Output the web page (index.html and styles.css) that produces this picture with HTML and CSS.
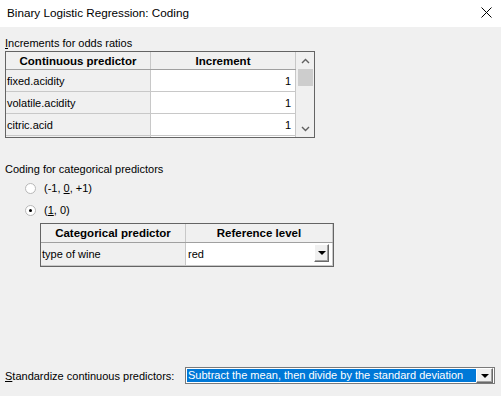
FILE: index.html
```html
<!DOCTYPE html>
<html lang="en">
<head>
    <meta charset="UTF-8">
    <title>Binary Logistic Regression: Coding</title>
    <link rel="stylesheet" href="styles.css">
</head>
<body>
    <div class="dialog">
        <div class="titlebar">
            <span class="title">Binary Logistic Regression: Coding</span>
            <svg class="close" width="11" height="11" viewBox="0 0 11 11">
                <path d="M0.5 0.5 L10.5 10.5 M10.5 0.5 L0.5 10.5" stroke="#000" stroke-width="1" fill="none"/>
            </svg>
        </div>

        <div class="content">
            <div class="label"><u>I</u>ncrements for odds ratios</div>
            <div class="grid-box increments">
                <div class="grid-scroll">
                    <table class="grid">
                        <tr>
                            <th class="col-a">Continuous predictor</th>
                            <th class="col-b">Increment</th>
                        </tr>
                        <tr><td class="name">fixed.acidity</td><td class="num">1</td></tr>
                        <tr><td class="name">volatile.acidity</td><td class="num">1</td></tr>
                        <tr><td class="name">citric.acid</td><td class="num">1</td></tr>
                        <tr class="peek"><td class="name"></td><td class="num"></td></tr>
                    </table>
                </div>
                <div class="scrollbar">
                    <svg class="arrow" width="9" height="6" viewBox="0 0 9 6">
                        <path d="M1 5 L4.5 1.5 L8 5" stroke="#606060" stroke-width="1.4" fill="none"/>
                    </svg>
                    <div class="thumb"></div>
                    <div class="track"></div>
                    <svg class="arrow" width="9" height="6" viewBox="0 0 9 6">
                        <path d="M1 1 L4.5 4.5 L8 1" stroke="#606060" stroke-width="1.4" fill="none"/>
                    </svg>
                </div>
            </div>

            <div class="label section">Coding for categorical predictors</div>
            <div class="radio-row">
                <span class="radio"></span>
                <span>(-1, <u>0</u>, +1)</span>
            </div>
            <div class="radio-row">
                <span class="radio checked"></span>
                <span>(<u>1</u>, 0)</span>
            </div>

            <div class="grid-box categorical">
                <table class="grid">
                    <tr>
                        <th class="col-c">Categorical predictor</th>
                        <th class="col-d">Reference level</th>
                    </tr>
                    <tr>
                        <td class="name">type of wine</td>
                        <td class="combo-cell">
                            <span>red</span>
                            <span class="drop-btn"><span class="tri"></span></span>
                        </td>
                    </tr>
                </table>
            </div>

            <div class="standardize">
                <span class="std-label"><u>S</u>tandardize continuous predictors:</span>
                <div class="combo">
                    <span class="combo-text">Subtract the mean, then divide by the standard deviation</span>
                    <span class="drop-btn"><span class="tri"></span></span>
                </div>
            </div>
        </div>
    </div>
</body>
</html>
```

FILE: styles.css
```css
body {
    margin: 0;
    font-family: "Liberation Sans", Arial, sans-serif;
    font-size: 11px;
    color: #000;
}
.dialog {
    width: 501px;
    height: 396px;
    background-color: #f0f0f0;
    overflow: hidden;
}
.titlebar {
    height: 27px;
    background-color: #fff;
    display: flex;
    align-items: center;
    justify-content: space-between;
    padding: 0 9px 0 7px;
}
.title {
    font-size: 11.7px;
    margin-top: -2px;
}
.close {
    margin-top: -3px;
}
.content {
    padding: 8px 0 0 5px;
}
.label {
    height: 16px;
    line-height: 16px;
}
.label.section {
    margin-top: 23px;
}
.grid-box {
    border: 1px solid #646464;
    background-color: #fff;
    display: flex;
    overflow: hidden;
}
.increments {
    width: 308px;
    height: 85px;
}
.grid-scroll {
    width: 290px;
    height: 85px;
    overflow: hidden;
}
.grid {
    border-collapse: collapse;
    table-layout: fixed;
}
.grid th {
    height: 17px;
    padding: 0;
    font-size: 11.5px;
    font-weight: bold;
    text-align: center;
    background-color: #f0f0f0;
    border-right: 1px solid #c8c8c8;
    border-bottom: 1px solid #a0a0a0;
}
.grid td {
    height: 21px;
    padding: 0 4px 0 1px;
    border-right: 1px solid #c8c8c8;
    border-bottom: 1px solid #c8c8c8;
    white-space: nowrap;
}
.grid td.name {
    background-color: #f0f0f0;
}
.grid td.num {
    text-align: right;
    background-color: #fff;
}
.col-a {
    width: 144px;
}
.col-b {
    width: 144px;
}
.scrollbar {
    width: 18px;
    background-color: #f0f0f0;
    display: flex;
    flex-direction: column;
    align-items: center;
}
.scrollbar .arrow {
    margin: 6px 0 5px;
}
.thumb {
    width: 15px;
    height: 17px;
    background-color: #cdcdcd;
}
.track {
    flex: 1;
}
.radio-row {
    display: flex;
    align-items: center;
    height: 22px;
    padding-left: 20px;
    gap: 8px;
}
.radio {
    width: 11px;
    height: 11px;
    box-sizing: border-box;
    border: 1px solid #b8b8b8;
    border-radius: 50%;
    background-color: #fff;
    position: relative;
}
.radio.checked::after {
    content: "";
    position: absolute;
    left: 3px;
    top: 3px;
    width: 3px;
    height: 3px;
    border-radius: 50%;
    background-color: #000;
}
.categorical {
    margin: 2px 0 0 35px;
    width: 292px;
    height: 42px;
}
.col-c {
    width: 144px;
}
.col-d {
    width: 146px;
}
.grid td.combo-cell {
    background-color: #fff;
    padding: 0 3px 0 2px;
}
.combo-cell {
    position: relative;
}
.combo-cell .drop-btn {
    position: absolute;
    right: 3px;
    top: 1px;
}
.drop-btn {
    width: 15px;
    height: 18px;
    box-sizing: border-box;
    background-color: #f0f0f0;
    border: 1px solid #fff;
    border-right-color: #696969;
    border-bottom-color: #696969;
    box-shadow: inset -1px -1px 0 #a0a0a0;
    display: flex;
    align-items: center;
    justify-content: center;
    flex-shrink: 0;
}
.tri {
    width: 0;
    height: 0;
    border-left: 4px solid transparent;
    border-right: 4px solid transparent;
    border-top: 4px solid #000;
}
.standardize {
    display: flex;
    align-items: center;
    margin-top: 100px;
}
.std-label {
    width: 180px;
    flex-shrink: 0;
    white-space: nowrap;
}
.combo {
    width: 310px;
    height: 17px;
    box-sizing: border-box;
    border: 1px solid #7a7a7a;
    background-color: #fff;
    display: flex;
    align-items: stretch;
    padding: 1px;
}
.combo-text {
    flex: 1;
    background-color: #0078d7;
    color: #fff;
    line-height: 13px;
    padding-left: 1px;
    white-space: nowrap;
    overflow: hidden;
}
.combo .drop-btn {
    height: 15px;
    margin-top: -1px;
    width: 17px;
}
```
